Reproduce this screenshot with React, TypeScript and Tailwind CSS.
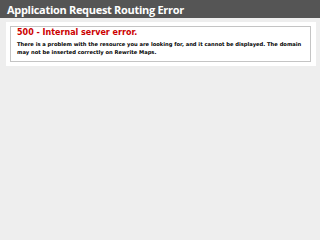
export default function App() {
  return (
    <div className="min-h-[240px] w-[320px] bg-[#eeeeee] font-['DejaVu_Sans',Verdana,sans-serif]">
      <div className="bg-[#555555] h-[18px] pl-[7px] flex items-center">
        <h1 className="text-white text-[11px] font-bold tracking-[-0.3px] leading-none font-['Open_Sans',sans-serif]">Application Request Routing Error</h1>
      </div>
      <div className="pl-[6px] pr-[4px] pt-[4px]">
        <div className="bg-white p-[4px] pr-[5px]">
          <div className="border border-[#c4c4c4] h-[36px] pl-[6px] pr-[4px] pt-[1px]">
            <h2 className="text-[#cc0000] text-[8px] font-bold leading-[10px]">500 - Internal server error.</h2>
            <h3 className="text-black text-[5.2px] font-bold leading-[7.5px] mt-[3px]">
              There is a problem with the resource you are looking for, and it cannot be displayed. The domain may not be inserted correctly on Rewrite Maps.
            </h3>
          </div>
        </div>
      </div>
    </div>
  );
}
